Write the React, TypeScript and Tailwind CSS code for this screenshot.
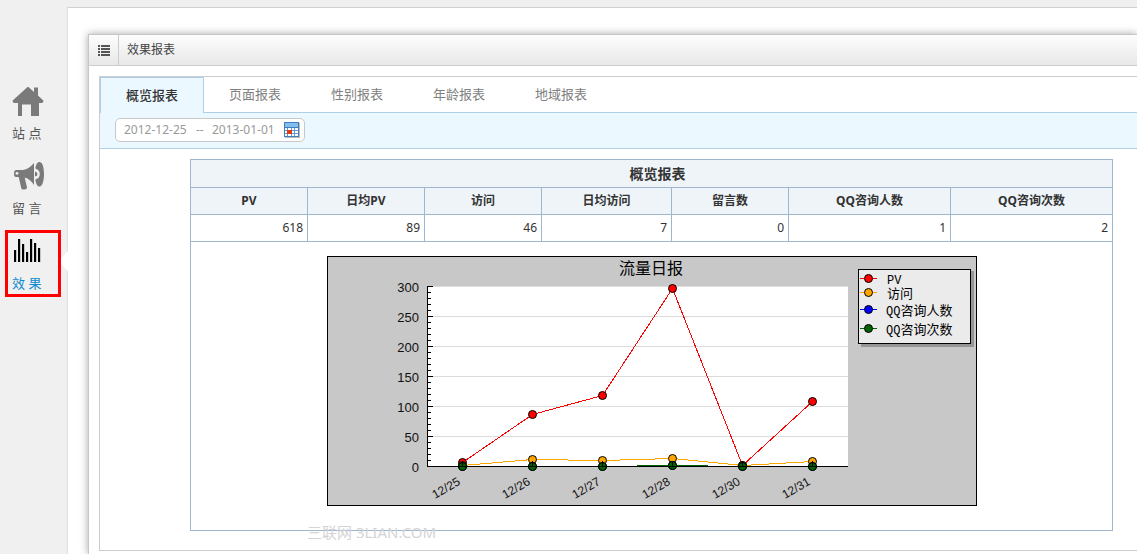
import { useState } from 'react';

type Series = {
  latin: string;
  cjk: string;
  color: string;
  values: number[];
  legendY: number;
};

const TABS = ['概览报表', '页面报表', '性别报表', '年龄报表', '地域报表'];

const COLUMNS = [
  { label: 'PV', value: 618, width: 'w-[117px]' },
  { label: '日均PV', value: 89, width: 'w-[117px]' },
  { label: '访问', value: 46, width: 'w-[117px]' },
  { label: '日均访问', value: 7, width: 'w-[130px]' },
  { label: '留言数', value: 0, width: 'w-[117px]' },
  { label: 'QQ咨询人数', value: 1, width: 'w-[162px]' },
  { label: 'QQ咨询次数', value: 2, width: 'w-[162px]' },
];

const DAYS = ['12/25', '12/26', '12/27', '12/28', '12/30', '12/31'];

const SERIES: Series[] = [
  { latin: 'PV', cjk: '', color: '#ff0000', values: [6, 87, 118, 296, 2, 108], legendY: 22 },
  { latin: '', cjk: '访问', color: '#ffa500', values: [2, 12, 10, 13, 1, 8], legendY: 36 },
  { latin: 'QQ', cjk: '咨询人数', color: '#0000ff', values: [0, 0, 0, 1, 0, 0], legendY: 53 },
  { latin: 'QQ', cjk: '咨询次数', color: '#006400', values: [0, 0, 0, 2, 0, 0], legendY: 72 },
];

// ================= ICONS =================

function HomeIcon() {
  return (
    <svg width="32" height="32" viewBox="0 0 32 32" fill="#7a7a7a">
      <path d="M15.500 1H16.500L22 6V1.500H26V9.500L31.300 14.500V16L30 17H27V30H19V18.500H10V30H6V17H2L.7 16V14.500Z" />
    </svg>
  );
}

function MegaphoneIcon() {
  return (
    <svg width="32" height="32" viewBox="0 0 32 32" fill="#7a7a7a">
      <path d="M4 9H11C15 8.500 19 5.500 22 2V24C19.500 20 16.500 17.500 12.700 16.500L15 26.500Q15 28.500 12.500 28.500H11Q9.500 28.500 9.200 27L6.700 16H4Q2 16 2 13.500V11.500Q2 9 4 9Z" />
      <path d="M27.500 1C30.500 1 32 6.500 32 13S30.500 25.500 27.500 25.500C25.300 25.500 24 23 23.300 18.500C26 18 27.800 16 27.800 13S26 8.200 23.300 7.500C24 3.500 25.300 1 27.500 1Z" />
      <path d="M23 10.500Q25.500 11 25.500 13T23 15.500Z" />
      <circle cx="5" cy="12.300" r="1.400" fill="#f0f0f0" />
    </svg>
  );
}

function BarsIcon() {
  const tops = [14, 3, 8, 16, 3, 7, 12];
  return (
    <svg width="32" height="32" viewBox="0 0 32 32" shapeRendering="crispEdges">
      {tops.map((top, i) => (
        <rect key={i} x={2 + i * 4} y={top} width="2" height={26 - top} />
      ))}
      {tops.map((top, i) => (
        <rect key={i} x={4 + i * 4} y={top} width="1" height={26 - top} fill="#c4c4c4" />
      ))}
    </svg>
  );
}

function ListIcon() {
  return (
    <svg width="12" height="11" viewBox="0 0 12 11" fill="#555" shapeRendering="crispEdges">
      {[0, 3, 6, 9].map((y) => (
        <g key={y}>
          <rect x="0" y={y} width="2" height="2" />
          <rect x="3" y={y} width="9" height="2" />
        </g>
      ))}
    </svg>
  );
}

function CalendarIcon() {
  return (
    <svg width="16" height="16" viewBox="0 0 16 16" shapeRendering="crispEdges">
      <rect x="1" y="1" width="15" height="15" fill="#b9b9b9" />
      <rect x="0" y="0" width="15" height="15" fill="#3f7fbc" />
      <rect x="1" y="1" width="13" height="4" fill="#82bdec" />
      <rect x="1" y="6" width="13" height="8" fill="#5f9bd3" />
      {[6, 9, 12].map((y) =>
        [1, 4, 8, 11].map((x) => (
          <rect key={`${x}-${y}`} x={x} y={y} width={x === 4 || x === 11 ? 3 : 2} height="2" fill="#fff" />
        ))
      )}
      <rect x="3" y="8" width="5" height="4" fill="#e13a0c" />
    </svg>
  );
}

// ================= CHART =================

const pointX = (i: number) => 135 + i * 70;
const pointY = (v: number) => Math.round(210 - v * 0.6);

function Marker({ x, y, color }: { x: number; y: number; color: string }) {
  return <circle cx={x + 0.5} cy={y + 0.5} r="4" fill={color} stroke="#000" />;
}

function TrafficChart() {
  return (
    <svg
      width="650"
      height="250"
      viewBox="0 0 650 250"
      className="mx-auto block font-['Liberation_Sans','Noto_Sans_CJK_SC',sans-serif]"
      role="img"
      aria-label="流量日报"
    >
      <g shapeRendering="crispEdges">
        <rect width="650" height="250" />
        <rect x="1" y="1" width="648" height="248" fill="#c8c8c8" />
        <rect x="100" y="30" width="421" height="180" fill="#fff" />
        {[50, 100, 150, 200, 250, 300].map((v) => (
          <rect key={v} x="101" y={pointY(v)} width="420" height="1" fill="#dcdcdc" />
        ))}
        {/* axes */}
        <rect x="100" y="30" width="1" height="181" />
        <rect x="100" y="210" width="421" height="1" />
        {Array.from({ length: 31 }, (_, i) => (
          <rect key={i} x="101" y={30 + i * 6} width={i % 5 === 0 ? 5 : 3} height="1" />
        ))}
      </g>

      <text x="324" y="18" textAnchor="middle" fontSize="16">
        流量日报
      </text>

      {[0, 50, 100, 150, 200, 250, 300].map((v) => (
        <text key={v} x="92" y={pointY(v) + 6} textAnchor="end" fontSize="13" fill="#111">
          {v}
        </text>
      ))}

      {DAYS.map((day, i) => (
        <text
          key={day}
          x={pointX(i) - 1}
          y="228"
          textAnchor="end"
          fontSize="12"
          fill="#111"
          transform={`rotate(-30 ${pointX(i) - 1} 228)`}
        >
          {day}
        </text>
      ))}

      {SERIES.map((s) => (
        <g key={s.color}>
          <polyline
            points={s.values.map((v, i) => `${pointX(i) + 0.5},${pointY(v) + 0.5}`).join(' ')}
            fill="none"
            stroke={s.color}
            shapeRendering="crispEdges"
          />
          {s.values.map((v, i) => (
            <Marker key={i} x={pointX(i)} y={pointY(v)} color={s.color} />
          ))}
        </g>
      ))}
      <g shapeRendering="crispEdges">
        {DAYS.map((day, i) => (
          <rect key={day} x={pointX(i)} y="205" width="1" height="5" />
        ))}
        <rect x="100" y="210" width="421" height="1" />
      </g>

      {/* legend */}
      <g shapeRendering="crispEdges">
        <rect x="534" y="15" width="113" height="76" fill="#969696" />
        <rect x="531" y="13" width="113" height="75" />
        <rect x="532" y="14" width="111" height="73" fill="#ebebeb" />
      </g>
      {SERIES.map((s) => (
        <g key={s.color}>
          <rect x="533" y={s.legendY} width="17" height="1" fill={s.color} />
          <Marker x={541} y={s.legendY} color={s.color} />
          <text
            x={s.latin === 'QQ' ? 559 : 560}
            y={s.legendY + 6}
            fontSize="13"
            className="font-['Liberation_Mono','Noto_Sans_CJK_SC',monospace]"
          >
            <tspan fontSize="12">{s.latin}</tspan>
            {s.cjk}
          </text>
        </g>
      ))}
    </svg>
  );
}

// ================= PAGE =================

const NAV = [
  { label: '站 点', icon: <HomeIcon /> },
  { label: '留 言', icon: <MegaphoneIcon /> },
  { label: '效 果', icon: <BarsIcon />, active: true },
];

export default function App() {
  const [tab, setTab] = useState(0);
  const [from, setFrom] = useState('2012-12-25');
  const [to, setTo] = useState('2013-01-01');

  return (
    <div className="flex h-screen overflow-hidden bg-[#f0f0f0] font-['Noto_Sans','Noto_Sans_CJK_SC',sans-serif] text-xs text-[#333]">
      <nav className="w-[67px] shrink-0 pt-[86px]">
        {NAV.map((item) => (
          <a
            key={item.label}
            href="#"
            className={`relative block h-[75px] pl-3 text-[13px] leading-5 ${
              item.active ? 'text-[#0d8ad0]' : 'text-[#555]'
            }`}
          >
            {item.icon}
            <span className="mt-[5px] block">{item.label}</span>
            {item.active && (
              <>
                <span className="absolute -top-1.5 left-[5px] h-[67px] w-14 border-[3px] border-[#fe0000]" />
                <svg className="absolute top-3.5 left-[61px]" width="8" height="22" fill="#fff">
                  <path d="M8 0V22L0 14V8Z" />
                </svg>
              </>
            )}
          </a>
        ))}
      </nav>

      <main className="mt-[7px] flex min-w-0 flex-1 flex-col border-t border-l border-t-[#d0d0d0] border-l-[#e0e0e0] bg-white pt-[26px] pl-5">
        <section className="flex-1 border-t border-l border-[#c6c6c6] bg-white shadow-[0_0_8px_rgba(0,0,0,0.35)]">
          <header className="flex h-[31px] border-b border-[#ccc] bg-linear-to-b from-[#fdfdfd] to-[#e8e8e8]">
            <button
              type="button"
              aria-label="菜单"
              className="flex w-[30px] items-center justify-center border-r border-[#ccc]"
            >
              <ListIcon />
            </button>
            <h1 className="pl-2 leading-[30px] text-[#444]">效果报表</h1>
          </header>

          <div className="mt-2.5 ml-2.5 border-y border-l border-[#ccc] pb-[19px]">
            <div className="flex h-9 border-b border-[#aed0e6]">
              {TABS.map((name, i) => (
                <button
                  key={name}
                  type="button"
                  onClick={() => setTab(i)}
                  className={`px-[25px] text-[13px] ${
                    tab === i
                      ? '-mb-px border-x border-t border-[#aed0e6] bg-[#ecf8ff] font-medium text-[#333]'
                      : 'text-[#808080]'
                  }`}
                >
                  {name}
                </button>
              ))}
            </div>

            <div className="flex h-9 border-b border-[#aed0e6] bg-[#ecf8ff] pt-[5px] pl-[15px]">
              <div className="flex h-6 items-center rounded-[5px] border border-[#c8c8c8] bg-white pr-1 pl-2 text-[#999]">
                <input
                  aria-label="开始日期"
                  value={from}
                  onChange={(e) => setFrom(e.target.value)}
                  className="w-[72px] outline-none"
                />
                <span className="w-4">--</span>
                <input
                  aria-label="结束日期"
                  value={to}
                  onChange={(e) => setTo(e.target.value)}
                  className="w-[72px] outline-none"
                />
                <button type="button" aria-label="选择日期">
                  <CalendarIcon />
                </button>
              </div>
            </div>

            <div className="mt-2.5 mr-6 ml-[90px]">
              <table className="w-full table-fixed border-collapse [&_td]:border [&_td]:border-[#9fb6cf] [&_th]:border [&_th]:border-[#9fb6cf] [&_th]:bg-[#eff4f9]">
                <colgroup>
                  {COLUMNS.map((col) => (
                    <col key={col.label} className={col.width} />
                  ))}
                </colgroup>
                <thead>
                  <tr className="h-7 text-sm">
                    <th colSpan={7} className="pl-3">概览报表</th>
                  </tr>
                  <tr className="h-[27px]">
                    {COLUMNS.map((col) => (
                      <th key={col.label}>{col.label}</th>
                    ))}
                  </tr>
                </thead>
                <tbody>
                  <tr className="h-[27px] text-right">
                    {COLUMNS.map((col) => (
                      <td key={col.label} className="pr-1">
                        {col.value}
                      </td>
                    ))}
                  </tr>
                  <tr>
                    <td colSpan={7} className="relative pt-3.5 pb-6">
                      <TrafficChart />
                      <span className="absolute -bottom-3 left-[116px] text-[15px] leading-5 text-[#d4d4d8]">
                        三联网 3LIAN.COM
                      </span>
                    </td>
                  </tr>
                </tbody>
              </table>
            </div>
          </div>
        </section>
      </main>
    </div>
  );
}
